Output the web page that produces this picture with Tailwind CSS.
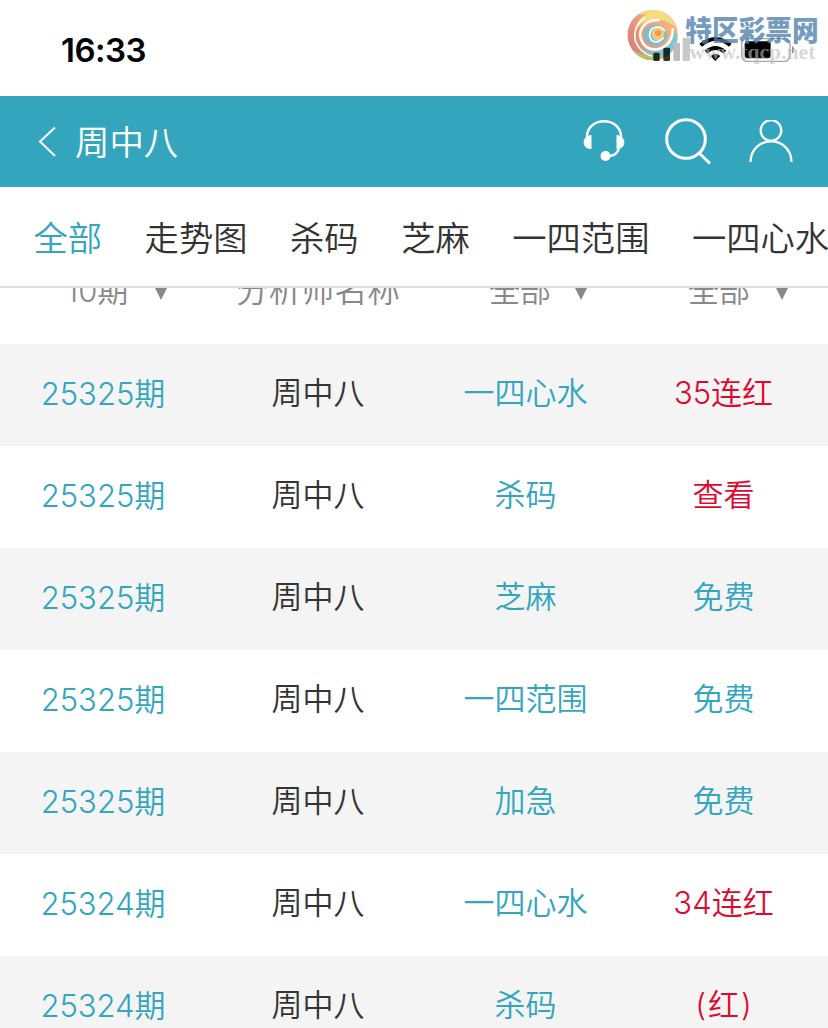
<!DOCTYPE html>
<html lang="zh-CN">
<head>
    <meta charset="UTF-8">
    <meta name="viewport" content="width=device-width, initial-scale=1.0">
    <title>周中八</title>
    <script src="https://cdn.jsdelivr.net/npm/@tailwindcss/browser@4"></script>
</head>
<body class="bg-white w-[828px] h-[1028px] overflow-hidden font-['Inter','Noto_Sans_CJK_SC',sans-serif] font-[350] text-[#333]">
    <!-- 状态栏 -->
    <div class="relative h-24 flex items-start justify-between">
        <span class="ml-[61px] mt-[30px] text-[33px] leading-10 font-semibold text-black tracking-[-0.5px]">16:33</span>
        <svg class="w-[218px] h-20" viewBox="0 0 654 240">
            <g fill="none" stroke="#000" stroke-width="12">
                <path d="M272 136Q316 98 361 136"/>
                <path d="M288 156Q316 132 345 156"/>
            </g>
            <path d="M302 168Q316 156 331 168L316 183Z"/>
            <rect x="395" y="116" width="145" height="68" rx="17" fill="none" stroke="#a5a5a5" stroke-width="4"/>
            <rect x="404" y="124" width="78" height="51" rx="9" fill="#000"/>
            <path d="M546 137Q558 149 546 162Z" fill="#888"/>
        </svg>

        <!-- 网站水印 -->
        <svg class="absolute right-0 top-0 w-[218px] h-20" viewBox="0 0 654 240">
            <defs>
                <linearGradient id="ball" x1="0.1" y1="0.7" x2="0.9" y2="0.2">
                    <stop offset="0" stop-color="#d5877c"/>
                    <stop offset="0.45" stop-color="#f0a080"/>
                    <stop offset="1" stop-color="#f7b57a"/>
                </linearGradient>
                <clipPath id="round"><circle cx="128" cy="105" r="76"/></clipPath>
            </defs>
            <g clip-path="url(#round)">
                <circle cx="128" cy="105" r="76" fill="url(#ball)"/>
                <path d="M84 44Q130 10 178 50Q192 66 196 80Q150 46 104 66Q84 76 76 92Q80 58 110 42Z" fill="#f6dc80"/>
                <path d="M60 146Q100 172 150 162Q188 148 204 112V190H80Z" fill="#b9c068"/>
                <path d="M92 140Q130 168 168 140Q186 122 190 86Q208 110 196 140Q166 176 124 164Q104 158 92 140Z" fill="#7dc6da"/>
                <path d="M103 112Q100 74 140 74Q170 78 172 106Q166 136 140 138Q112 136 103 112Z" fill="#74bfd3"/>
                <circle cx="144" cy="102" r="19" fill="#f6c878"/>
                <g fill="none" stroke="#fffaf2" stroke-linecap="round">
                    <path d="M104 54Q68 78 76 122Q88 156 124 168" stroke-width="5"/>
                    <path d="M146 60Q96 60 90 104Q98 152 144 148Q188 136 188 88" stroke-width="8"/>
                    <path d="M164 92Q148 72 125 87Q112 106 126 122Q144 132 160 114" stroke-width="5"/>
                </g>
                <circle cx="144" cy="99" r="9" fill="#f09a4e"/>
            </g>
            <rect x="130" y="158" width="19" height="25" rx="4" fill="#000" fill-opacity="0.8"/>
            <rect x="160" y="143" width="20" height="40" rx="4" fill="#000" fill-opacity="0.8"/>
            <rect x="190" y="128" width="20" height="55" rx="4" fill="#bdbdbd"/>
            <rect x="218" y="113" width="22" height="70" rx="4" fill="#c8c8c8"/>
            <text x="226" y="124" textLength="400" lengthAdjust="spacingAndGlyphs" font-family="Noto Sans CJK SC, sans-serif" font-weight="900" font-size="84" fill="#4f81ad" fill-opacity="0.8">特区彩票网</text>
            <text x="238" y="178" textLength="378" lengthAdjust="spacingAndGlyphs" font-family="Liberation Serif, serif" font-weight="700" font-size="60" fill="#bdbdbd" fill-opacity="0.6">www.tqcp.net</text>
        </svg>
    </div>

    <!-- 顶部导航栏 -->
    <header class="h-[91px] bg-[#33a6be] flex items-center text-white">
        <svg class="ml-[37px] w-5 h-8" viewBox="0 0 20 32" fill="none" stroke="currentColor" stroke-width="2">
            <path d="M18 1.500L3 15.500L18 30"/>
        </svg>
        <span class="ml-[18px] mt-1 text-[34.4px] leading-none">周中八</span>
        <svg class="ml-auto w-[42px] h-[43px]" viewBox="0 0 42 43" fill="none" stroke="currentColor" stroke-width="2.4">
            <path d="M4 17V15.500C6 -3.500 36 -3.500 38 15.500V17M36.500 27Q34 36 26 36"/>
            <path d="M8.500 15v14C-2 29-2 16 8.500 15ZM33.500 15v14C44 29 44 16 33.500 15Z" fill="currentColor" stroke="none"/>
            <circle cx="22.500" cy="36" r="5" fill="currentColor" stroke="none"/>
        </svg>
        <svg class="ml-10 w-[47px] h-[47px]" viewBox="0 0 47 47" fill="none" stroke="currentColor" stroke-width="3">
            <circle cx="21" cy="21" r="19.300"/>
            <path d="M34 35L45 45.500"/>
        </svg>
        <svg class="ml-[37px] mr-[35px] w-11 h-11" viewBox="0 0 44 44" fill="none" stroke="currentColor" stroke-width="2.300">
            <circle cx="22" cy="10.500" r="10.300"/>
            <path d="M1.500 42C2 14.500 42 14.500 42.500 42"/>
        </svg>
    </header>

    <!-- 分类标签 -->
    <nav class="h-[101px] border-b-2 border-[#dfdfdf] flex items-center gap-[42.5px] pl-[33.5px] pt-[5px] whitespace-nowrap text-[34.3px] leading-none">
        <a class="text-[#33a6be] shrink-0">全部</a>
        <a class="shrink-0">走势图</a>
        <a class="shrink-0">杀码</a>
        <a class="shrink-0">芝麻</a>
        <a class="shrink-0">一四范围</a>
        <a class="shrink-0">一四心水</a>
    </nav>

    <!-- 筛选表头,上半部分被标签栏遮住 -->
    <div class="h-14 overflow-hidden flex flex-col">
        <div class="-mt-[13px] grid grid-cols-[207px_222px_193px_206px] text-[31px] leading-[31px] text-[#888]">
            <div class="flex pl-[66px]">10期<svg class="ml-[25px] mt-[9px] w-4 h-4" viewBox="0 0 16 16"><path d="M0 0H16L8 16Z" fill="#888"/></svg></div>
            <div class="pl-[29px] text-[32.8px]">分析师名称</div>
            <div class="flex pl-[60px]">全部<svg class="ml-[22px] mt-[9px] w-4 h-4" viewBox="0 0 16 16"><path d="M0 0H16L8 16Z" fill="#888"/></svg></div>
            <div class="flex pl-[66px]">全部<svg class="ml-6 mt-[9px] w-4 h-4" viewBox="0 0 16 16"><path d="M0 0H16L8 16Z" fill="#888"/></svg></div>
        </div>
    </div>

    <!-- 列表 -->
    <div id="list"></div>

    <script>
        const rows = [
            ['25325期', '一四心水', '35连红', true],
            ['25325期', '杀码', '查看', true],
            ['25325期', '芝麻', '免费', false],
            ['25325期', '一四范围', '免费', false],
            ['25325期', '加急', '免费', false],
            ['25324期', '一四心水', '34连红', true],
            ['25324期', '杀码', '<span class="tracking-[2px] ml-0.5">(红)</span>', true]
        ];

        // 渲染列表
        document.getElementById('list').innerHTML = rows.map(([issue, type, result, red]) => `
            <div class="h-[102px] pb-[5px] grid grid-cols-[206px_224px_191px_205px] items-center text-center text-[31px] leading-none odd:bg-[#f4f4f4] text-[#33a6be]">
                <div class="pt-px">${issue}</div>
                <div class="text-[#333]">周中八</div>
                <div>${type}</div>
                <div class="${red ? 'text-[#dc0a32]' : 'text-[#33a6be]'}">${result}</div>
            </div>
        `).join('');
    </script>
</body>
</html>
